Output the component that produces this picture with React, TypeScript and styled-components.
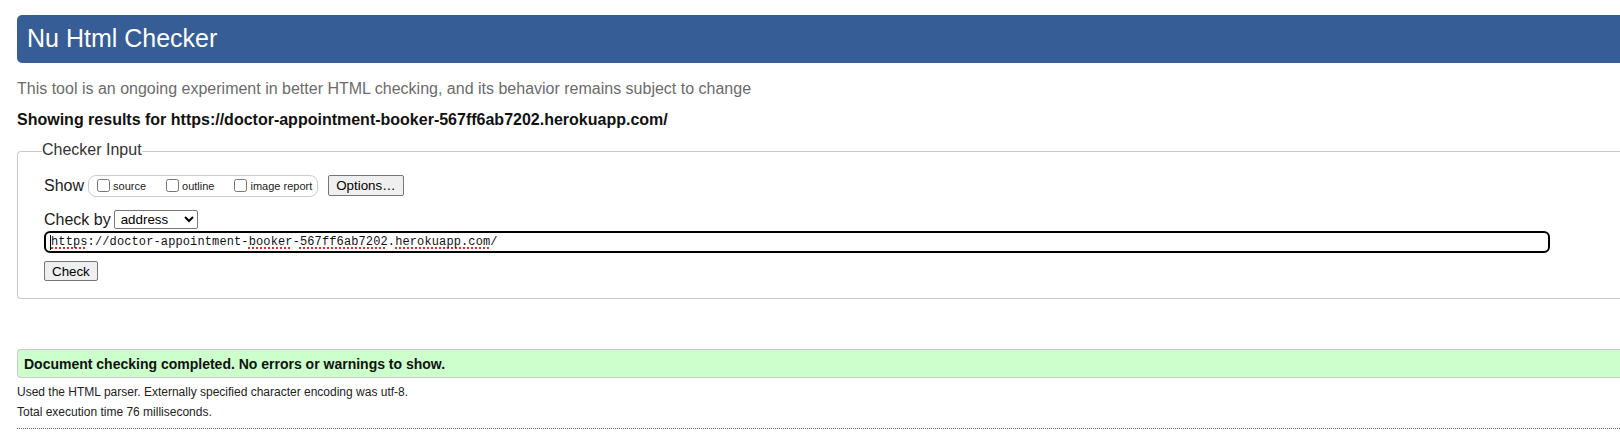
import React from "react";
import styled, { createGlobalStyle } from "styled-components";

const GlobalStyle = createGlobalStyle`
  html, body {
    margin: 0;
    padding: 0;
    background: #ffffff;
    overflow: hidden;
  }
  body {
    font-family: "Liberation Sans", Arial, sans-serif;
    color: #000000;
  }
`;

const Page = styled.main`
  padding: 15px 0 0 17px;
`;

const Title = styled.h1`
  margin: 0;
  padding: 1px 10px 3px;
  line-height: 44px;
  font-size: 25px;
  font-weight: normal;
  color: #ffffff;
  background: #365d95;
  border-radius: 5px 0 0 5px;
`;

const Tagline = styled.p`
  margin: 17px 0 0;
  font-size: 16px;
  line-height: 18px;
  color: #6b6b6b;
`;

const ResultsFor = styled.p`
  margin: 13px 0 0;
  font-size: 16px;
  line-height: 18px;
  font-weight: bold;
  color: #111;
`;

const InputFieldset = styled.fieldset`
  margin: 12px 0 0;
  padding: 12px 0 17px 24px;
  border: 1px solid #c9c9c9;
  border-right: none;
  border-radius: 4px 0 0 4px;
  min-width: 0;
`;

const Legend = styled.legend`
  padding: 0 0 3px;
  font-size: 16px;
  line-height: 18px;
  color: #333;
`;

const FieldsetBody = styled.div`
  padding-left: 2px;
`;

const Row = styled.div<{ $top: number; $height: number }>`
  display: flex;
  align-items: center;
  margin-top: ${(p) => p.$top}px;
  height: ${(p) => p.$height}px;
`;

const FieldLabel = styled.span<{ $gap: number }>`
  font-size: 16px;
  line-height: 18px;
  color: #1a1a1a;
  margin-right: ${(p) => p.$gap}px;
`;

const CheckGroup = styled.div`
  display: flex;
  align-items: center;
  gap: 16px;
  height: 22px;
  box-sizing: border-box;
  border: 1px solid #cccccc;
  border-radius: 8px;
  padding: 0 5px 0 4px;
`;

const CheckOption = styled.label`
  display: flex;
  align-items: center;
  font-size: 11px;
  line-height: 13px;
  color: #222;
  padding-top: 2px;
`;

const CheckBox = styled.input`
  width: 13px;
  height: 13px;
  margin: -2px 3px 0 4px;
`;

const Button = styled.button<{ $height: number; $pad: number; $left?: number }>`
  height: ${(p) => p.$height}px;
  padding: 0 ${(p) => p.$pad}px;
  margin: 0 0 0 ${(p) => p.$left ?? 0}px;
  font-family: "Liberation Sans", Arial, sans-serif;
  font-size: 13.33px;
  color: #000;
  background: #efefef;
  border: 1px solid #767676;
  border-radius: 2px;
  box-sizing: border-box;
`;

const Select = styled.select`
  width: 84px;
  height: 19px;
  box-sizing: border-box;
  font-family: "Liberation Sans", Arial, sans-serif;
  font-size: 13.33px;
  color: #000;
  background: #fff;
  border: 1px solid #767676;
  border-radius: 2px;
  padding: 0 0 0 2px;
  margin: 0;
`;

const UrlBox = styled.div`
  display: flex;
  align-items: center;
  margin-top: 1px;
  height: 22px;
  width: calc(100% - 70px);
  box-sizing: border-box;
  border: 2px solid #000;
  border-radius: 6px;
  padding: 0 4px;
  font-family: "Liberation Mono", "DejaVu Sans Mono", monospace;
  font-size: 12px;
  letter-spacing: 0.12px;
  line-height: 18px;
  white-space: nowrap;
  color: #111;
`;

const Caret = styled.span`
  display: inline-block;
  width: 1px;
  height: 15px;
  background: #000;
`;

const Misspelled = styled.span`
  text-decoration: underline dotted #e0301e;
  text-decoration-thickness: 2px;
  text-underline-offset: 2px;
`;

const ResultBox = styled.div`
  margin-top: 50px;
  padding: 6px 6px 5px;
  border: 1px solid #c9c9c9;
  border-right: none;
  border-radius: 4px 0 0 4px;
  background: #ccffcc;
  font-size: 14px;
  line-height: 16px;
  font-weight: bold;
  color: #111;
`;

const Notes = styled.div`
  margin-top: 4px;
`;

const Note = styled.p`
  margin: 0;
  font-size: 12px;
  line-height: 20px;
  color: #222;
`;

const Rule = styled.hr`
  margin: 6px 0 0;
  border: 0;
  border-top: 1px dotted #666;
  height: 0;
`;

export default function App() {
  return (
    <>
      <GlobalStyle />
      <Page>
        <Title>Nu Html Checker</Title>
        <Tagline>
          This tool is an ongoing experiment in better HTML checking, and its behavior remains subject to change
        </Tagline>
        <ResultsFor>Showing results for https://doctor-appointment-booker-567ff6ab7202.herokuapp.com/</ResultsFor>
        <InputFieldset>
          <Legend>Checker Input</Legend>
          <FieldsetBody>
            <Row $top={0} $height={23}>
              <FieldLabel $gap={4}>Show</FieldLabel>
              <CheckGroup>
                <CheckOption>
                  <CheckBox type="checkbox" />
                  source
                </CheckOption>
                <CheckOption>
                  <CheckBox type="checkbox" />
                  outline
                </CheckOption>
                <CheckOption>
                  <CheckBox type="checkbox" />
                  image report
                </CheckOption>
              </CheckGroup>
              <Button type="button" $height={21} $pad={7} $left={10}>
                Options…
              </Button>
            </Row>
            <Row $top={12} $height={21}>
              <FieldLabel $gap={3}>Check by</FieldLabel>
              <Select defaultValue="address">
                <option value="address">address</option>
                <option value="file">file upload</option>
                <option value="text">text input</option>
              </Select>
            </Row>
            <UrlBox role="textbox">
              <Caret />
              <Misspelled>https</Misspelled>://doctor-appointment-<Misspelled>booker</Misspelled>-
              <Misspelled>567ff6ab7202</Misspelled>.<Misspelled>herokuapp.com</Misspelled>/
            </UrlBox>
            <Row $top={8} $height={20}>
              <Button type="button" $height={20} $pad={7}>
                Check
              </Button>
            </Row>
          </FieldsetBody>
        </InputFieldset>
        <ResultBox>Document checking completed. No errors or warnings to show.</ResultBox>
        <Notes>
          <Note>Used the HTML parser. Externally specified character encoding was utf-8.</Note>
          <Note>Total execution time 76 milliseconds.</Note>
        </Notes>
        <Rule />
      </Page>
    </>
  );
}
